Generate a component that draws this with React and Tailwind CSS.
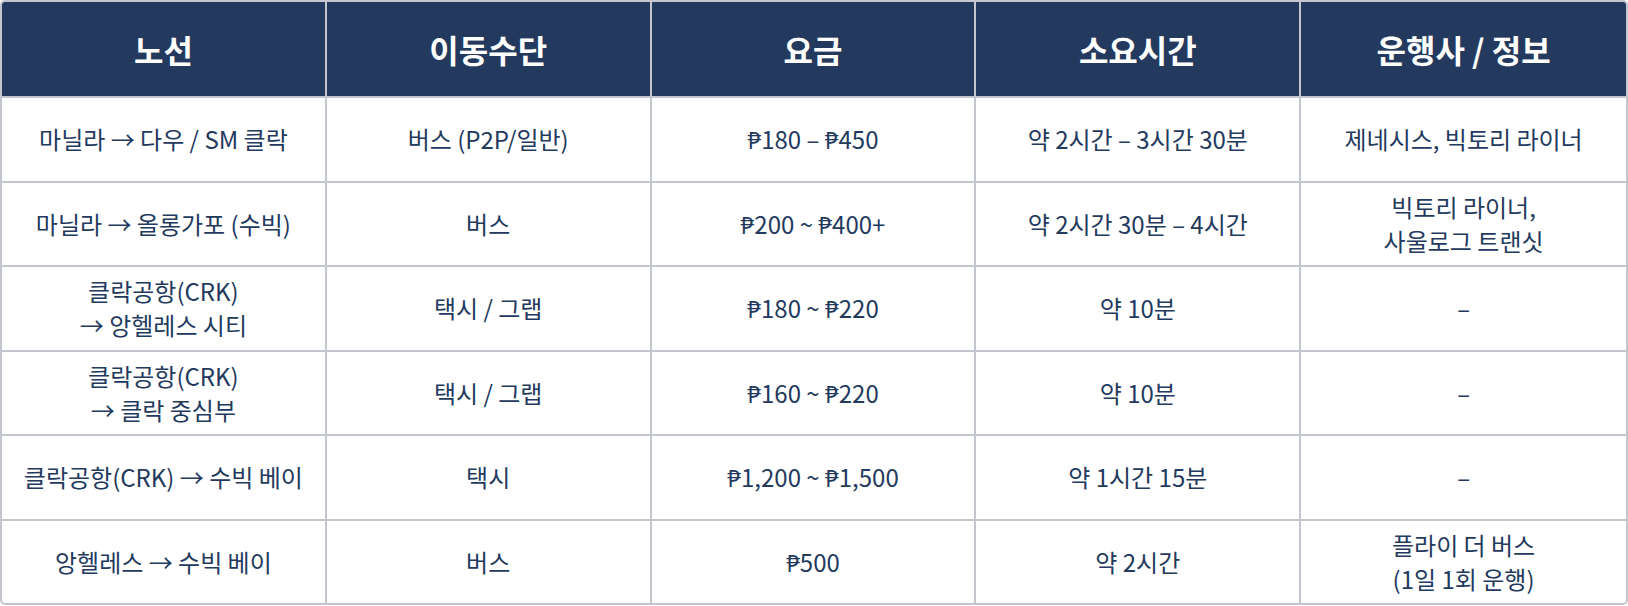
import React from "react";

const headers = ["노선", "이동수단", "요금", "소요시간", "운행사 / 정보"];

const rows = [
  [["마닐라 → 다우 / SM 클락"], ["버스 (P2P/일반)"], ["₱180 – ₱450"], ["약 2시간 – 3시간 30분"], ["제네시스, 빅토리 라이너"]],
  [["마닐라 → 올롱가포 (수빅)"], ["버스"], ["₱200 ~ ₱400+"], ["약 2시간 30분 – 4시간"], ["빅토리 라이너,", "사울로그 트랜싯"]],
  [["클락공항(CRK)", "→ 앙헬레스 시티"], ["택시 / 그랩"], ["₱180 ~ ₱220"], ["약 10분"], ["–"]],
  [["클락공항(CRK)", "→ 클락 중심부"], ["택시 / 그랩"], ["₱160 ~ ₱220"], ["약 10분"], ["–"]],
  [["클락공항(CRK) → 수빅 베이"], ["택시"], ["₱1,200 ~ ₱1,500"], ["약 1시간 15분"], ["–"]],
  [["앙헬레스 → 수빅 베이"], ["버스"], ["₱500"], ["약 2시간"], ["플라이 더 버스", "(1일 1회 운행)"]],
];

export default function App() {
  return (
    <div
      className="w-[1628px] h-[606px] bg-white"
      style={{ fontFamily: '"Noto Sans CJK KR", "Noto Sans", sans-serif' }}
    >
      <div className="w-[1628px] border-2 border-[#c3c5cf] rounded-[5px] overflow-hidden">
        <div className="grid grid-cols-5 bg-[#233a5e]">
          {headers.map((h, i) => (
            <div
              key={i}
              className={`h-[96px] flex items-center justify-center border-b-2 border-[#c3c5cf] text-white font-bold text-[32px] ${
                i < 4 ? "border-r-2" : ""
              }`}
            >
              {h}
            </div>
          ))}
        </div>
        {rows.map((row, ri) => (
          <div key={ri} className="grid grid-cols-5">
            {row.map((cell, ci) => (
              <div
                key={ci}
                className={`flex flex-col items-center justify-center text-center text-[#233a5e] text-[24px] leading-[34px] border-[#c3c5cf] ${
                  ri < rows.length - 1 ? "h-[84.5px] border-b-2" : "h-[82.5px]"
                } ${ci < 4 ? "border-r-2" : ""}`}
              >
                {cell.map((line, li) => (
                  <div key={li}>{line}</div>
                ))}
              </div>
            ))}
          </div>
        ))}
      </div>
    </div>
  );
}
